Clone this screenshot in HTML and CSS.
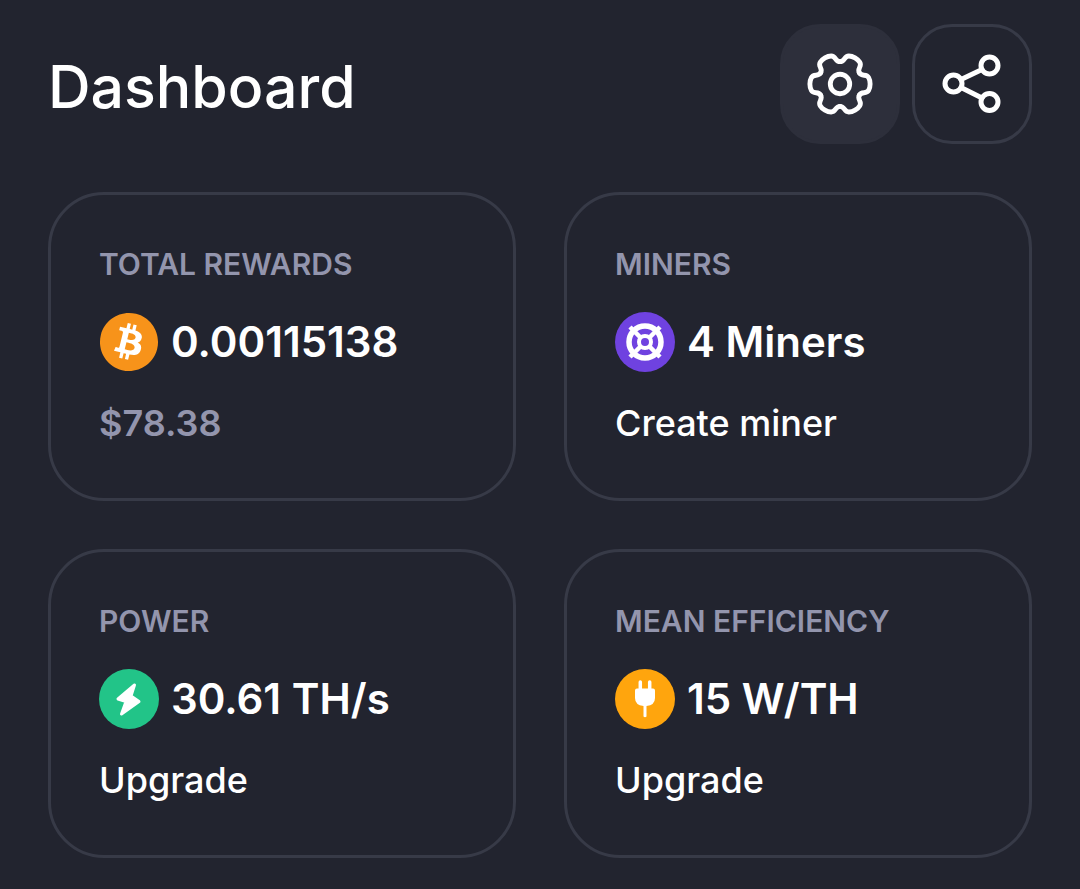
FILE: index.html
```html
<!DOCTYPE html>
<html>
    <head>
        <title>Dashboard</title>
        <link rel="stylesheet" href="styles.css">
    </head>
    <body>
        <div class="page">
<!----- HEADER ----->
            <div class="header">
                <h1 class="title">Dashboard</h1>
                <div class="actions">
                    <div class="iconButton iconButtonActive">
                        <svg width="68" height="68" viewBox="-35 -35 70 70" fill="none" stroke="#fff" stroke-width="5" stroke-linecap="round" stroke-linejoin="round">
                            <path id="lobe" d="M19.9 -11.5C22.5 -7 27 -11 29.5 -6.5C31.5 -3 31.5 3 29.5 6.5C27 11 22.5 7 19.9 11.5"/>
                            <use href="#lobe" transform="rotate(60)"/>
                            <use href="#lobe" transform="rotate(120)"/>
                            <use href="#lobe" transform="rotate(180)"/>
                            <use href="#lobe" transform="rotate(240)"/>
                            <use href="#lobe" transform="rotate(300)"/>
                            <circle r="10"/>
                        </svg>
                    </div>
                    <div class="iconButton">
                        <svg width="70" height="70" viewBox="0 0 70 70" fill="none" stroke="#fff" stroke-width="5" stroke-linecap="round">
                            <circle cx="52.5" cy="16.5" r="8.5"/>
                            <circle cx="16.5" cy="34.5" r="8.5"/>
                            <circle cx="52.5" cy="53" r="8.5"/>
                            <path d="M24 30.5L45 20.5M24 38.5L45 49"/>
                        </svg>
                    </div>
                </div>
            </div>
<!----- CARDS ----->
            <div class="cards">
                <div class="card">
                    <div class="cardLabel">TOTAL REWARDS</div>
                    <div class="cardValue">
                        <svg class="coin" width="60" height="60" viewBox="-0.4 -0.4 24.8 24.8">
                            <circle cx="12" cy="12" r="10" fill="#fff"/>
                            <path fill="#F7931A" d="M23.638 14.904c-1.602 6.43-8.113 10.34-14.542 8.736C2.67 22.05-1.244 15.525.362 9.105 1.962 2.67 8.475-1.243 14.9.358c6.43 1.605 10.342 8.115 8.738 14.548v-.002zm-6.35-4.613c.24-1.59-.974-2.45-2.64-3.03l.54-2.153-1.315-.33-.525 2.107c-.345-.087-.705-.167-1.064-.25l.526-2.127-1.32-.33-.54 2.165c-.285-.067-.565-.132-.84-.2l-1.815-.45-.35 1.407s.975.225.955.236c.535.136.63.486.615.766l-1.477 5.92c-.075.166-.24.406-.614.314.015.02-.96-.24-.96-.24l-.66 1.51 1.71.426.93.242-.54 2.19 1.32.327.54-2.17c.36.1.705.19 1.05.273l-.51 2.154 1.32.33.545-2.19c2.24.427 3.93.257 4.64-1.774.57-1.637-.03-2.58-1.217-3.196.854-.193 1.5-.76 1.68-1.93h.01zm-3.01 4.22c-.404 1.64-3.157.75-4.05.53l.72-2.9c.896.23 3.757.67 3.33 2.37zm.41-4.24c-.37 1.49-2.662.735-3.405.55l.654-2.64c.744.18 3.137.524 2.75 2.084v.006z"/>
                        </svg>
                        <span>0.00115138</span>
                    </div>
                    <div class="cardSub cardSubMuted">$78.38</div>
                </div>
                <div class="card">
                    <div class="cardLabel">MINERS</div>
                    <div class="cardValue">
                        <svg class="coin" width="60" height="60" viewBox="-30 -30 60 60">
                            <circle r="30" fill="#6F42E0"/>
                            <g fill="none" stroke="#fff">
                                <circle r="16" stroke-width="5.5"/>
                                <circle r="6" stroke-width="4"/>
                                <path stroke-width="4.5" d="M-15 -15L-5 -5M15 -15L5 -5M-15 15L-5 5M15 15L5 5"/>
                            </g>
                        </svg>
                        <span>4 Miners</span>
                    </div>
                    <div class="cardSub">Create miner</div>
                </div>
                <div class="card">
                    <div class="cardLabel">POWER</div>
                    <div class="cardValue">
                        <svg class="coin" width="60" height="60" viewBox="-30 -30 60 60">
                            <circle r="30" fill="#22C488"/>
                            <path fill="#fff" stroke="#fff" stroke-width="3" stroke-linejoin="round" d="M5.5 -14L-11 0L-3 2.5L-7.5 15L10 2.5L2 -3Z"/>
                        </svg>
                        <span>30.61 TH/s</span>
                    </div>
                    <div class="cardSub">Upgrade</div>
                </div>
                <div class="card">
                    <div class="cardLabel">MEAN EFFICIENCY</div>
                    <div class="cardValue">
                        <svg class="coin" width="60" height="60" viewBox="-30 -30 60 60">
                            <circle r="30" fill="#FFA50D"/>
                            <path fill="#fff" d="M-8 -10.5H8Q10 -10.5 10 -8.5V-1Q10 6 1.5 7V17.5Q0 19 -1.5 17.5V7Q-10 6 -10 -1V-8.5Q-10 -10.5 -8 -10.5Z"/>
                            <path stroke="#fff" stroke-width="3.5" stroke-linecap="round" d="M-4.7 -17V-10M4.7 -17V-10"/>
                        </svg>
                        <span>15 W/TH</span>
                    </div>
                    <div class="cardSub">Upgrade</div>
                </div>
            </div>
        </div>
    </body>
</html>
```

FILE: styles.css
```css
body{
    margin: 0;
    background-color: #22242f;
    color: #fff;
    font-family: "Inter", sans-serif;
}
.page{
    padding: 24px 48px 32px 48px;
}

/*----- HEADER -----*/
.header{
    display: flex;
    justify-content: space-between;
    align-items: center;
    margin-bottom: 48px;
}
.title{
    margin: 0;
    font-size: 59px;
    font-weight: 500;
    line-height: 70px;
    padding-top: 6px;
}
.actions{
    display: flex;
    gap: 12px;
}
.iconButton{
    display: flex;
    align-items: center;
    justify-content: center;
    box-sizing: border-box;
    width: 120px;
    height: 120px;
    border: 3px solid #373a47;
    border-radius: 40px;
}
.iconButtonActive{
    background-color: #2d2f3b;
    border-color: #2d2f3b;
}

/*----- CARDS -----*/
.cards{
    display: grid;
    grid-template-columns: 468px 468px;
    grid-auto-rows: 309px;
    gap: 48px;
}
.card{
    display: flex;
    flex-direction: column;
    box-sizing: border-box;
    padding: 49px 48px;
    border: 3px solid #373a47;
    border-radius: 56px;
}
.cardLabel{
    font-size: 30px;
    font-weight: 600;
    line-height: 40px;
    color: #9395ad;
}
.cardValue{
    display: flex;
    align-items: center;
    gap: 12px;
    margin-top: 28px;
    font-size: 42px;
    font-weight: 600;
    line-height: 60px;
}
.coin{
    flex-shrink: 0;
}
.cardSub{
    margin-top: 29px;
    font-size: 36px;
    font-weight: 500;
    line-height: 44px;
}
.cardSubMuted{
    font-weight: 600;
    color: #9395ad;
}
```
